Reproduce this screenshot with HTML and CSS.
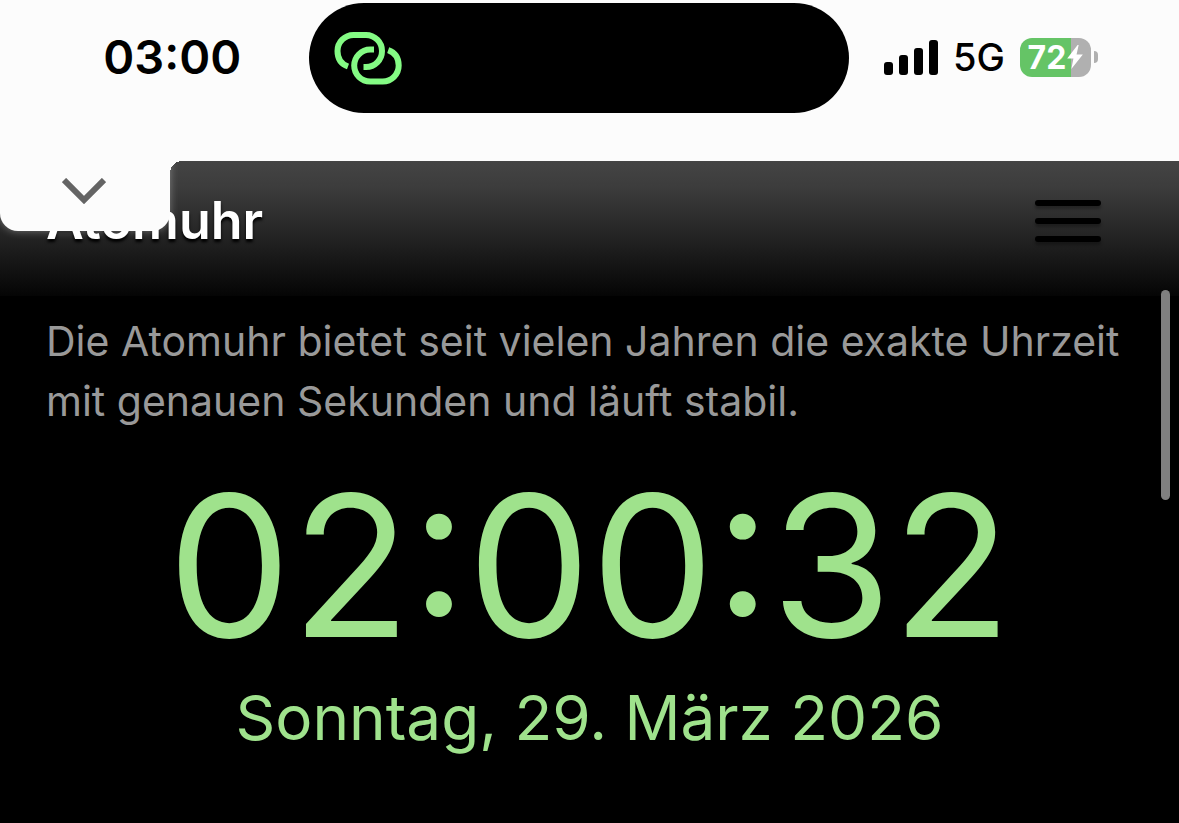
FILE: index.html
```html
<!DOCTYPE html>
<html lang="de">
<head>
    <meta charset="UTF-8">
    <meta name="viewport" content="width=device-width, initial-scale=1.0">
    <title>Atomuhr</title>
    <link rel="stylesheet" href="styles.css">
</head>
<body>
    <div class="status-bar">
        <div class="status-time">03:00</div>
        <div class="island">
            <svg class="link-icon" viewBox="34 31 68 53" aria-hidden="true">
                <path d="M48 65.500C41 63 37.500 57 37.500 50A16 16 0 0 1 53.500 34H66A16 16 0 0 1 66 66H63.500"/>
                <path d="M88.200 49.100C95.200 51.600 98.700 57.600 98.700 64.600A16 16 0 0 1 82.700 80.600H70.200A16 16 0 0 1 70.200 48.600H74"/>
            </svg>
        </div>
        <div class="status-icons">
            <svg class="signal" viewBox="0 0 54 35" aria-hidden="true">
                <rect x="0" y="22" width="9" height="13" rx="3"/>
                <rect x="15" y="15" width="9" height="20" rx="3"/>
                <rect x="30" y="8" width="9" height="27" rx="3"/>
                <rect x="45" y="0" width="9" height="35" rx="3"/>
            </svg>
            <span class="network">5G</span>
            <div class="battery">
                <div class="battery-body">
                    <span>72</span>
                    <svg class="bolt" viewBox="0 0 15 23" aria-hidden="true">
                        <path d="M10 0L0 13H6L4 23L15 9H9L11 0Z"/>
                    </svg>
                </div>
                <div class="battery-cap"></div>
            </div>
        </div>
    </div>

    <div class="page">
        <button class="pull-tab" type="button" aria-label="Ausklappen">
            <svg viewBox="0 0 44 26" aria-hidden="true">
                <path d="M2 2L22 22L42 2"/>
            </svg>
        </button>

        <header class="header">
            <h1>Atomuhr</h1>
            <button class="menu-button" type="button" aria-label="Menü">
                <span></span>
                <span></span>
                <span></span>
            </button>
        </header>

        <main>
            <p class="intro">Die Atomuhr bietet seit vielen Jahren die exakte Uhrzeit mit genauen Sekunden und läuft stabil.</p>
            <div class="clock">02:00:32</div>
            <div class="date">Sonntag, 29. März 2026</div>
        </main>

        <div class="scroll-thumb"></div>
    </div>
</body>
</html>
```
FILE: styles.css
```css
/* General Styles */
* {
    box-sizing: border-box;
}

body {
    font-family: Inter, 'Liberation Sans', sans-serif;
    background-color: #000;
    margin: 0;
    min-height: 100vh;
    display: flex;
    flex-direction: column;
}

button {
    border: none;
    padding: 0;
    cursor: pointer;
}

/* Status Bar */
.status-bar {
    display: grid;
    grid-template-columns: 1fr 540px 1fr;
    align-items: start;
    height: 161px;
    padding: 3px 22px 0 0;
    background-color: #fcfcfc;
    color: #000;
}

.status-time {
    padding-left: 36px;
    font-size: 47px;
    font-weight: 600;
    line-height: 108px;
    text-align: center;
}

.island {
    display: flex;
    align-items: center;
    height: 110px;
    padding-left: 25px;
    border-radius: 55px;
    background-color: #000;
}

.link-icon {
    width: 68px;
    height: 53px;
    fill: none;
    stroke: #84fb84;
    stroke-width: 6;
}

.status-icons {
    display: flex;
    justify-content: flex-end;
    align-items: center;
    gap: 15px;
    height: 108px;
    padding-right: 59px;
}

.signal {
    width: 54px;
    height: 35px;
}

.network {
    font-size: 38px;
    font-weight: 500;
    line-height: 48px;
}

.battery {
    display: flex;
    align-items: center;
    gap: 3px;
}

.battery-body {
    display: flex;
    justify-content: center;
    align-items: center;
    gap: 1px;
    width: 71px;
    height: 39px;
    border-radius: 12px;
    background: linear-gradient(to right, #65c466 72%, #b0b0b0 72%);
    color: #fff;
    font-size: 32px;
    font-weight: 700;
}

.bolt {
    width: 16px;
    height: 24px;
    fill: #fff;
}

.battery-cap {
    width: 4px;
    height: 12px;
    border-radius: 0 4px 4px 0;
    background-color: #b0b0b0;
}

/* Page */
.page {
    position: relative;
    flex: 1;
    color: #fff;
}

.header {
    display: flex;
    justify-content: space-between;
    align-items: center;
    height: 135px;
    padding: 0 78px 16px 46px;
    background: linear-gradient(#444, #3c3c3c 20%, #050505);
}

h1 {
    margin: 0;
    font-size: 52px;
    font-weight: 600;
    line-height: 60px;
    text-shadow: 0 3px 3px #000;
}

.menu-button {
    display: flex;
    flex-direction: column;
    gap: 12px;
    width: 66px;
    background: none;
}

.menu-button span {
    height: 6px;
    border-radius: 3px;
    background-color: #000;
    box-shadow: 0 3px 3px rgba(0, 0, 0, 0.3);
}

/* Tab hanging over the header */
.pull-tab {
    position: absolute;
    top: 0;
    left: 0;
    width: 170px;
    height: 70px;
    padding: 0 2px 10px 0;
    border-radius: 0 0 18px 18px;
    background-color: #fcfcfc;
    box-shadow: 0 0 9px rgba(255, 255, 255, 0.35);
}

.pull-tab::after {
    content: "";
    position: absolute;
    top: 0;
    left: 100%;
    width: 12px;
    height: 12px;
    background: radial-gradient(circle at bottom right, transparent 12px, #fcfcfc 12px);
}

.pull-tab svg {
    display: block;
    width: 44px;
    height: 26px;
    margin: 0 auto;
    fill: none;
    stroke: #646464;
    stroke-width: 6;
}

/* Content */
main {
    padding: 15px 46px;
}

.intro {
    margin: 0;
    color: #999;
    font-size: 41px;
    line-height: 60px;
}

.clock,
.date {
    color: #9fe28c;
    text-align: center;
}

.clock {
    margin-top: 16px;
    font-size: 196px;
    line-height: 238px;
}

.date {
    font-size: 62px;
    line-height: 66px;
}

.scroll-thumb {
    position: absolute;
    top: 129px;
    right: 9px;
    width: 9px;
    height: 210px;
    border-radius: 5px;
    background-color: #808080;
}
```
